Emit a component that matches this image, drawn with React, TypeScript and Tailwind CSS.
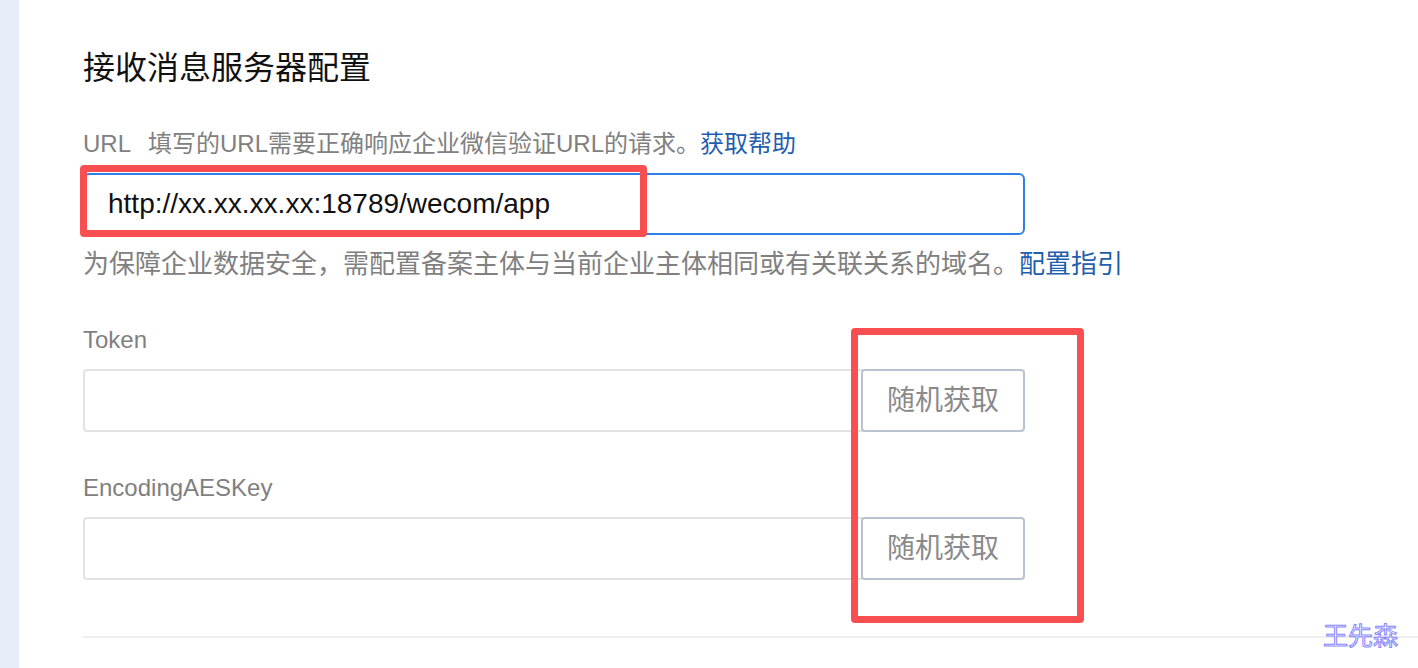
import React from 'react';

const RandomRow: React.FC = () => (
   <div className="flex h-[63px] w-[942px] mt-[11px]">
      <div className="flex-1 border-2 border-[#e2e2e2] rounded-l-[4px] bg-white" />
      <button className="w-[164px] -ml-[2px] border-2 border-[#b9c3d0] rounded-[4px] bg-white text-[28px] text-[#8a8a8a] leading-none">
         随机获取
      </button>
   </div>
);

export default function App() {
   return (
      <div className="relative flex h-[668px] w-full overflow-hidden bg-white font-['Liberation_Sans','Noto_Sans_CJK_SC',sans-serif]">
         <div className="w-[19px] shrink-0 bg-[#e8eef9]" />

         <div className="flex-1 pl-[64px] pt-[44px]">
            <h1 className="text-[32px] leading-[48px] text-[#111] font-normal">接收消息服务器配置</h1>

            <p className="mt-[34px] text-[24px] leading-[36px] text-[#808080]">
               <span className="mr-[17px]">URL</span>
               填写的URL需要正确响应企业微信验证URL的请求。
               <a className="text-[#1f5fae]">获取帮助</a>
            </p>

            <div className="mt-[11px] flex h-[62px] w-[942px] items-center rounded-[6px] border-2 border-[#2f80e6] pl-[23px] text-[28px] text-[#111]">
               http://xx.xx.xx.xx:18789/wecom/app
            </div>

            <p className="mt-[11px] text-[26px] leading-[36px] text-[#808080]">
               为保障企业数据安全，需配置备案主体与当前企业主体相同或有关联关系的域名。
               <a className="text-[#1f5fae]">配置指引</a>
            </p>

            <div className="mt-[40px] text-[24px] leading-[36px] text-[#7f7f7f]">Token</div>
            <RandomRow />

            <div className="mt-[38px] text-[24px] leading-[36px] text-[#7f7f7f]">EncodingAESKey</div>
            <RandomRow />

            <div className="mt-[56px] h-[2px] bg-[#eeeeee]" />
         </div>

         {/* annotation boxes */}
         <div className="absolute left-[80px] top-[165px] h-[72px] w-[567px] rounded-[4px] border-[7px] border-[#fa4f50]" />
         <div className="absolute left-[851px] top-[328px] h-[295px] w-[233px] rounded-[4px] border-[7px] border-[#fa4f50]" />

         <div className="absolute left-[1323px] top-[620px] text-[25px] leading-[32px] text-white [-webkit-text-stroke:1px_#8585ff]">
            王先森
         </div>
      </div>
   );
}
